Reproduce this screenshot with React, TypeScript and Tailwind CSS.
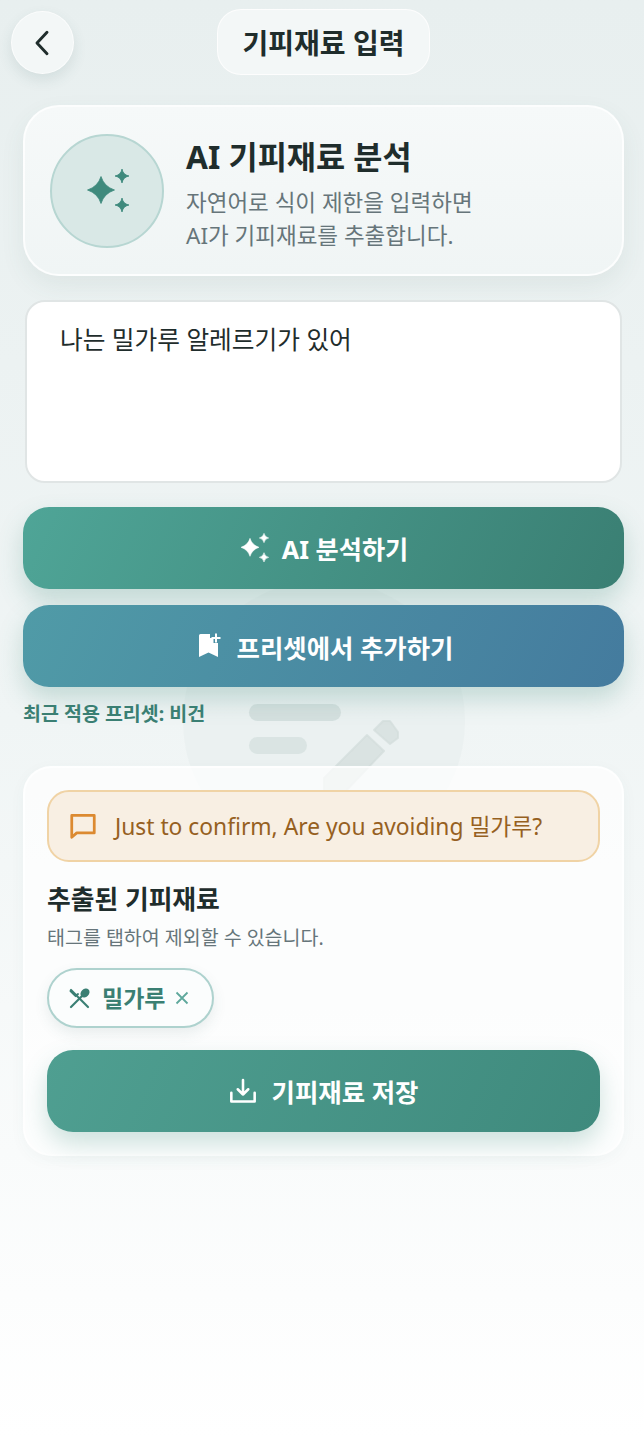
const font = "font-['Noto_Sans','Noto_Sans_CJK_KR',sans-serif]"

function Sparkles({ className }: { className?: string }) {
  return (
    <svg viewBox="0 0 54 54" fill="currentColor" stroke="currentColor" strokeWidth="0.8" strokeLinejoin="round" className={className}>
      <path d="M21 12.5 Q24 22.5 34.5 26 Q24 29.5 21 39.5 Q18 29.5 7.5 26 Q18 22.5 21 12.5 Z" />
      <path d="M42 5 Q43.2 10.8 49 12 Q43.2 13.2 42 19 Q40.8 13.2 35 12 Q40.8 10.8 42 5 Z" />
      <path d="M42 34 Q43.2 39.8 49 41 Q43.2 42.2 42 48 Q40.8 42.2 35 41 Q40.8 39.8 42 34 Z" />
    </svg>
  )
}

export default function App() {
  return (
    <div className={`${font} relative h-[1438px] w-full overflow-hidden bg-gradient-to-b from-[#e8efef] via-[#f0f5f5] via-50% to-white`}>
      {/* watermark behind the page */}
      <div className="absolute left-[183px] top-[580px] h-[282px] w-[282px] rounded-full bg-[#e4ecec]/40" />
      <div className="absolute left-[249px] top-[704px] h-[17px] w-[92px] rounded-full bg-[#cfdcdb]/80" />
      <div className="absolute left-[249px] top-[737px] h-[17px] w-[58px] rounded-full bg-[#cfdcdb]/60" />
      <svg viewBox="0 0 80 80" className="absolute left-[322px] top-[717px] h-[80px] w-[80px] text-[#d3dddc]/70" fill="currentColor" stroke="currentColor" strokeWidth="2" strokeLinejoin="round">
        <path d="M52 13 L61 4 L68 4 L76 15 L76 21 L68 27 Z" />
        <path d="M45 18 L62 34 L21 77 L2 77 L2 61 Z" />
      </svg>

      <div className="relative flex flex-col">
        {/* header */}
        <header className="relative flex h-[84px] items-center justify-center pl-[3px]">
          <button className="absolute left-[11px] top-[11px] flex h-[63px] w-[63px] items-center justify-center rounded-full border border-white/70 bg-[#f3f7f7] shadow-[0_6px_14px_rgba(60,100,95,0.12)]">
            <svg viewBox="0 0 24 24" fill="none" stroke="#1f2d2c" strokeWidth="2.2" strokeLinecap="round" strokeLinejoin="round" className="h-[32px] w-[32px]">
              <path d="M15 4 L7.5 12 L15 20" />
            </svg>
          </button>
          <div className="flex h-[66px] w-[213px] items-center justify-center rounded-[24px] border border-white/80 bg-[#f3f7f7] pt-[2px]">
            <h1 className="text-[28px] font-bold text-[#1f2d2c]">기피재료 입력</h1>
          </div>
        </header>

        <main className="flex flex-col pl-[23px] pr-[20px] pt-[21px]">
          {/* intro card */}
          <section className="flex h-[171px] items-center gap-[22px] rounded-[36px] border-2 border-white/80 bg-gradient-to-b from-[#f6f9f9] to-[#f0f5f5] pl-[25px] shadow-[0_10px_24px_rgba(60,100,95,0.08)]">
            <div className="flex h-[114px] w-[114px] items-center justify-center rounded-full border-2 border-[#b7d6d2] bg-[#d9e8e6]">
              <Sparkles className="h-[54px] w-[54px] text-[#3f8a7d]" />
            </div>
            <div className="flex flex-col pt-[5px]">
              <h2 className="text-[31.7px] font-bold leading-[44px] text-[#1f2d2c]">AI 기피재료 분석</h2>
              <p className="mt-[7px] text-[22.5px] leading-[33px] text-[#66757a]">
                자연어로 식이 제한을 입력하면
                <br />
                AI가 기피재료를 추출합니다.
              </p>
            </div>
          </section>

          {/* input */}
          <div className="mx-[2px] mt-[24px] h-[183px] rounded-[20px] border-2 border-[#e0e5e5] bg-white px-[33px] pt-[20px] text-[24.7px] leading-[36px] text-[#1f2d2c]">
            나는 밀가루 알레르기가 있어
          </div>

          {/* actions */}
          <button className="mt-[24px] flex h-[82px] items-center justify-center gap-[10px] rounded-[26px] bg-[linear-gradient(115deg,#4fa597,#3a7f73)] pr-[3px] text-[25.2px] font-bold text-white shadow-[0_12px_24px_rgba(63,138,125,0.25)]">
            <Sparkles className="h-[36px] w-[36px]" />
            <span className="pt-[4px]">AI 분석하기</span>
          </button>
          <button className="mt-[16px] flex h-[82px] items-center justify-center gap-[13px] rounded-[26px] bg-[linear-gradient(115deg,#509ba7,#447b9e)] text-[25.4px] font-bold text-white shadow-[0_12px_24px_rgba(63,138,125,0.25)]">
            <svg viewBox="0 0 30 30" fill="currentColor" className="h-[30px] w-[30px]">
              <path d="M5 4.5 Q5 3 6.5 3 H16 V7 H19.5 V12 H24 V26 L14.5 21.5 L5 26 Z" />
              <path d="M21 2.5 H23 V6 H26.5 V8 H23 V11.5 H21 V8 H17.5 V6 H21 Z" />
            </svg>
            <span className="pt-[4px]">프리셋에서 추가하기</span>
          </button>
          <p className="mt-[13px] text-[19.5px] font-bold leading-[28px] text-[#3a7f73]">최근 적용 프리셋: 비건</p>

          {/* result card */}
          <section className="mt-[38px] flex h-[390px] flex-col rounded-[28px] border-2 border-white/70 bg-white/70 px-[22px] pt-[22px] shadow-[0_4px_16px_rgba(60,100,95,0.04)]">
            <div className="flex h-[72px] items-center gap-[17px] rounded-[22px] border-2 border-[#f0d3a5] bg-[#f8efe3] pl-[19px]">
              <svg viewBox="0 0 24 24" fill="none" stroke="#dc8a31" strokeWidth="2.2" strokeLinejoin="round" className="h-[30px] w-[30px] shrink-0">
                <path d="M3 3.5 H21 V17.5 H7 L3 21 Z" />
              </svg>
              <span className="pt-[3px] text-[22.8px] text-[#96601f]">Just to confirm, Are you avoiding 밀가루?</span>
            </div>
            <h3 className="mt-[20px] text-[25.8px] font-bold leading-[34px] text-[#1f2d2c]">추출된 기피재료</h3>
            <p className="mt-[9px] text-[19.5px] leading-[26px] text-[#66757a]">태그를 탭하여 제외할 수 있습니다.</p>
            <div className="mt-[17px] flex h-[60px] w-[167px] items-center rounded-full border-2 border-[#aed2ce] bg-[#fbfdfd] pl-[20px] shadow-[0_6px_14px_rgba(60,100,95,0.1)]">
              <svg viewBox="0 0 22 22" fill="none" stroke="#3a7f73" strokeWidth="2.2" strokeLinecap="round" className="h-[22px] w-[22px]">
                <path d="M2 20 L13 9" />
                <ellipse cx="16" cy="6" rx="5" ry="4" fill="#3a7f73" stroke="none" transform="rotate(-45 16 6)" />
                <path d="M2 3 L19 20" />
                <path d="M1.5 4 L6.5 9 L9 7" strokeWidth="2" />
              </svg>
              <span className="ml-[11px] text-[23px] font-bold text-[#3a7f73]">밀가루</span>
              <svg viewBox="0 0 14 14" fill="none" stroke="#5ea89c" strokeWidth="1.8" className="ml-[10px] h-[14px] w-[14px]">
                <path d="M1.5 1.5 L12.5 12.5 M12.5 1.5 L1.5 12.5" />
              </svg>
            </div>
            <button className="mt-[22px] flex h-[82px] items-center justify-center gap-[15px] rounded-[26px] bg-[linear-gradient(115deg,#4f9f91,#3f8a7d)] text-[25.4px] font-bold text-white shadow-[0_12px_24px_rgba(63,138,125,0.25)]">
              <svg viewBox="0 0 24 24" fill="none" stroke="currentColor" strokeWidth="2.2" strokeLinecap="round" strokeLinejoin="round" className="h-[28px] w-[28px]">
                <path d="M12 2.5 V15 M7.5 10.5 L12 15 L16.5 10.5" />
                <path d="M2 13.5 V21 H22 V13.5" />
              </svg>
              <span className="pt-[3px]">기피재료 저장</span>
            </button>
          </section>
        </main>
      </div>
    </div>
  )
}
